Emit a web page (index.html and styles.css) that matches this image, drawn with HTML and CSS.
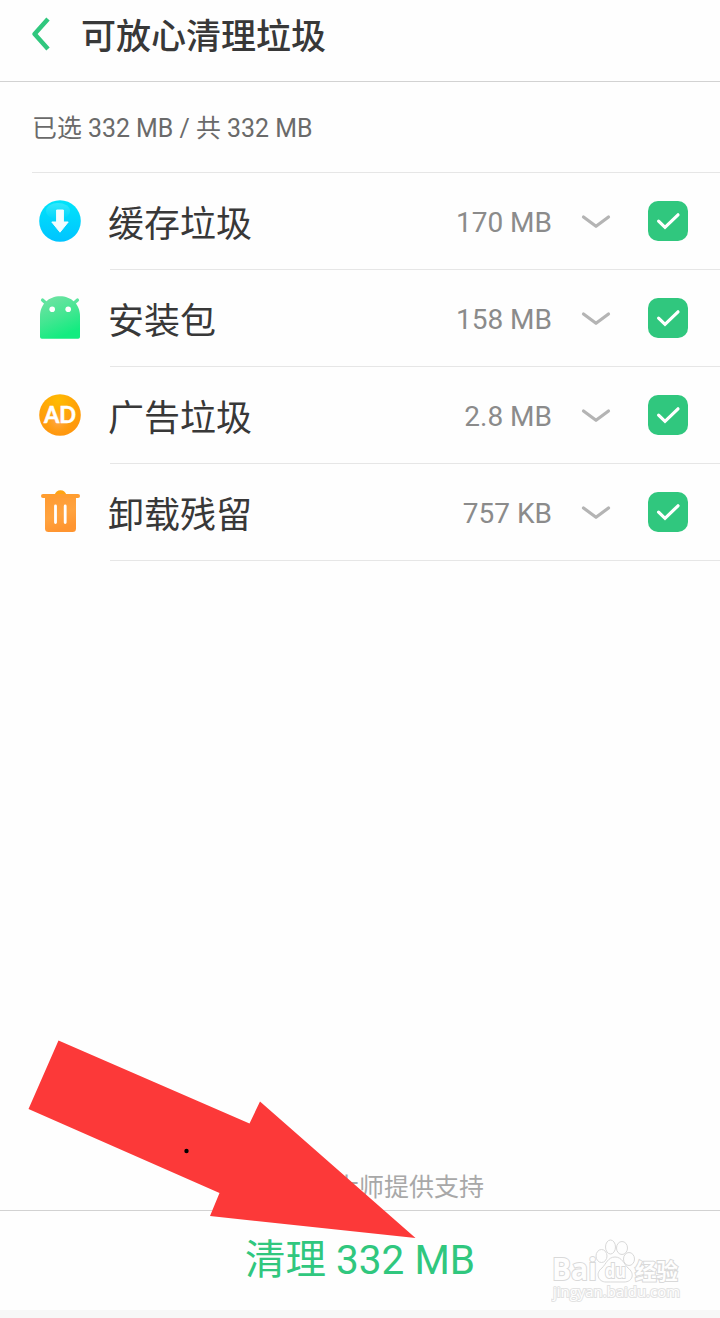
FILE: index.html
```html
<!DOCTYPE html>
<html lang="zh-CN">
<head>
    <meta charset="UTF-8">
    <meta name="viewport" content="width=device-width, initial-scale=1.0">
    <title>可放心清理垃圾</title>
    <link rel="stylesheet" href="styles.css">
</head>

<body>
    <!-- shared icons -->
    <svg class="defs" width="0" height="0">
        <symbol id="down" viewBox="0 0 30 16">
            <path d="M2.5 3 L15 12.300 L27.500 3" fill="none" stroke="#b4b4b4" stroke-width="3.2" stroke-linecap="round" stroke-linejoin="round"/>
        </symbol>
        <symbol id="check" viewBox="0 0 40 40">
            <path d="M10.6 20.2 L17 26.300 L30 13.800" fill="none" stroke="#fff" stroke-width="3.2" stroke-linecap="round" stroke-linejoin="miter"/>
        </symbol>
    </svg>

    <header class="header">
        <svg class="back" width="18" height="34" viewBox="0 0 18 34">
            <path d="M16 2 L2.600 17 L16 32" fill="none" stroke="#30c77e" stroke-width="4.500" stroke-linejoin="round"/>
        </svg>
        <h1>可放心清理垃圾</h1>
    </header>

    <p class="summary">已选 332 MB / 共 332 MB</p>

    <ul class="list">
        <li>
            <svg class="icon" width="44" height="44" viewBox="0 0 44 44">
                <defs>
                    <linearGradient id="blue" x1="0" y1="0" x2="0" y2="1">
                        <stop offset="0" stop-color="#00e4fa"/>
                        <stop offset="1" stop-color="#00c4ff"/>
                    </linearGradient>
                    <linearGradient id="shine" x1="0" y1="0" x2="0" y2="1">
                        <stop offset="0" stop-color="#fff" stop-opacity=".2"/>
                        <stop offset="1" stop-color="#fff" stop-opacity="0"/>
                    </linearGradient>
                </defs>
                <circle cx="22" cy="22" r="20.8" fill="url(#blue)"/>
                <ellipse cx="20" cy="12" rx="12" ry="8" fill="url(#shine)"/>
                <path d="M18.6 11 h6.8 v12 h4.8 L22 33.2 L13.8 23 h4.8 z" fill="#f2fdff" stroke="#f2fdff" stroke-linejoin="round"/>
            </svg>
            <div class="info">
                <span class="name">缓存垃圾</span>
                <span class="size">170 MB</span>
                <svg class="down" width="30" height="16"><use href="#down"/></svg>
                <svg class="check" width="40" height="40"><use href="#check"/></svg>
            </div>
        </li>
        <li>
            <svg class="icon" width="44" height="44" viewBox="0 0 44 44">
                <defs>
                    <linearGradient id="green" x1="0" y1="0" x2=".4" y2="1">
                        <stop offset="0" stop-color="#76e2a6"/>
                        <stop offset=".55" stop-color="#45e692"/>
                        <stop offset="1" stop-color="#13ec80"/>
                    </linearGradient>
                </defs>
                <path d="M4.5 4 L10 9 M39.5 4 L34 9" stroke="#5ce59e" stroke-width="3.2" stroke-linecap="round"/>
                <path d="M2 41 V20 C2 8 11 .2 22 .2 C33 .2 42 8 42 20 V41 Q42 42.8 40.2 42.8 H3.8 Q2 42.8 2 41 z" fill="url(#green)"/>
                <circle cx="14.2" cy="13.2" r="2.8" fill="#fff"/>
                <circle cx="30.2" cy="13.2" r="2.8" fill="#fff"/>
            </svg>
            <div class="info">
                <span class="name">安装包</span>
                <span class="size">158 MB</span>
                <svg class="down" width="30" height="16"><use href="#down"/></svg>
                <svg class="check" width="40" height="40"><use href="#check"/></svg>
            </div>
        </li>
        <li>
            <svg class="icon" width="44" height="44" viewBox="0 0 44 44">
                <defs>
                    <radialGradient id="orange" cx=".45" cy=".15" r=".9">
                        <stop offset="0" stop-color="#ffbc00"/>
                        <stop offset=".55" stop-color="#ff9f0a"/>
                        <stop offset="1" stop-color="#ff960f"/>
                    </radialGradient>
                    <radialGradient id="glow">
                        <stop offset="0" stop-color="#ffab55"/>
                        <stop offset="1" stop-color="#ff9d1c" stop-opacity="0"/>
                    </radialGradient>
                </defs>
                <circle cx="22" cy="22" r="20.8" fill="url(#orange)"/>
                <circle cx="20" cy="28" r="14" fill="url(#glow)"/>
                <text class="ad" x="22" y="30.2" text-anchor="middle">AD</text>
            </svg>
            <div class="info">
                <span class="name">广告垃圾</span>
                <span class="size">2.8 MB</span>
                <svg class="down" width="30" height="16"><use href="#down"/></svg>
                <svg class="check" width="40" height="40"><use href="#check"/></svg>
            </div>
        </li>
        <li>
            <svg class="icon" width="44" height="44" viewBox="0 0 44 44">
                <defs>
                    <linearGradient id="bin" x1="0" y1="0" x2=".3" y2="1">
                        <stop offset="0" stop-color="#ff9a30"/>
                        <stop offset=".6" stop-color="#ffa33f"/>
                        <stop offset="1" stop-color="#ff9530"/>
                    </linearGradient>
                </defs>
                <path d="M16.5 5 Q18 .2 22.5 .2 Q27 .2 28.5 5 z" fill="#ffa412"/>
                <path d="M7 6 H38 V38.5 Q38 42 34.5 42 H10.5 Q7 42 7 38.5 z" fill="url(#bin)"/>
                <rect x="3" y="4" width="39" height="4" rx="2" fill="#ff9d30"/>
                <path d="M17.5 16 V32.5 M27.2 16 V32.5" stroke="#fff" stroke-width="2.8" stroke-linecap="round"/>
            </svg>
            <div class="info">
                <span class="name">卸载残留</span>
                <span class="size">757 KB</span>
                <svg class="down" width="30" height="16"><use href="#down"/></svg>
                <svg class="check" width="40" height="40"><use href="#check"/></svg>
            </div>
        </li>
    </ul>

    <p class="support">大师提供支持</p>

    <footer class="footer">
        <button type="button">清理 332 MB</button>
    </footer>

    <!-- red pointer -->
    <svg class="arrow" width="390" height="200" viewBox="0 0 390 200">
        <polygon points="30.500,0.500 221.500,83.500 232,61.500 387.500,198 182,176 191.500,153 0.500,69" fill="#fc3939"/>
        <circle cx="158.500" cy="111" r="2.200" fill="#000"/>
    </svg>

    <!-- watermark -->
    <svg class="mark" width="140" height="66" viewBox="0 0 140 66">
        <g class="paw">
            <path d="M64 21 C57 21 55 28 51 32 C44 37 47 46 55 46 C60 46 68 46 73 46 C82 46 84 37 77 32 C73 28 71 21 64 21 z"/>
            <ellipse cx="50.500" cy="20" rx="5.500" ry="6.500"/>
            <ellipse cx="59.500" cy="11" rx="5" ry="7"/>
            <ellipse cx="71" cy="12" rx="5.500" ry="6.500"/>
            <ellipse cx="78" cy="23" rx="5.500" ry="6.500"/>
        </g>
        <text class="logo" x="1" y="44" textLength="45" lengthAdjust="spacingAndGlyphs">Bai</text>
        <text class="du" x="54" y="42" textLength="21" lengthAdjust="spacingAndGlyphs">du</text>
        <text class="cn" x="84" y="43" textLength="43" lengthAdjust="spacingAndGlyphs">经验</text>
        <text class="url" x="2" y="61" textLength="127" lengthAdjust="spacingAndGlyphs">jingyan.baidu.com</text>
    </svg>
</body>
</html>
```

FILE: styles.css
```css
* {
    box-sizing: border-box;
}
body {
    margin: 0;
    height: 1318px;
    display: flex;
    flex-direction: column;
    position: relative;
    overflow: hidden;
    background: #fefefe;
    color: #383838;
    font-family: Roboto, "Noto Sans CJK SC", sans-serif;
}
.defs {
    position: absolute;
}
.header {
    height: 82px;
    padding: 0 0 10px 32px;
    display: flex;
    align-items: center;
    border-bottom: 1px solid #d2d2d2;
}
.header h1 {
    margin: 4px 0 0 31px;
    font-size: 35px;
    line-height: 50px;
    font-weight: 500;
}
.back {
    margin-top: -3px;
}
.summary {
    margin: 0 0 0 32px;
    height: 91px;
    line-height: 94px;
    font-size: 24.9px;
    color: #6a6a6a;
    border-bottom: 1px solid #e6e6e6;
}
.list {
    list-style: none;
    margin: 0;
    padding: 0;
}
.list li {
    height: 97px;
    padding-left: 38px;
    display: flex;
    align-items: center;
}
.icon {
    margin-bottom: 2px;
}
.info {
    flex: 1;
    height: 97px;
    margin-left: 28px;
    padding-right: 32px;
    display: flex;
    align-items: center;
    border-bottom: 1px solid #e6e6e6;
}
.name {
    flex: 1;
    margin-left: -2px;
    font-size: 36px;
}
.size {
    padding-top: 2px;
    font-size: 28px;
    color: #8b8b8b;
}
.down {
    margin: 1px 37px 0 29px;
}
.check {
    background: #30c77e;
    border-radius: 10px;
}
.ad {
    font: 700 22px Lato, sans-serif;
    fill: #fff;
    stroke: #fff;
    stroke-width: 0.5px;
}
.support {
    margin: auto 0 0;
    padding: 2px 0 0 334px;
    font-size: 25px;
    line-height: 48px;
    height: 48px;
    color: #a8a8a8;
}
.footer {
    height: 108px;
    padding-bottom: 8px;
    border-top: 1px solid #d2d2d2;
    border-bottom: 8px solid #f7f7f7;
    display: flex;
    justify-content: center;
    align-items: center;
}
.footer button {
    border: none;
    padding: 0;
    background: none;
    font-family: inherit;
    font-size: 40.5px;
    color: #30c77e;
}
.arrow {
    position: absolute;
    left: 28px;
    top: 1040px;
}
.mark {
    position: absolute;
    left: 551px;
    top: 1236px;
    fill: #fefefe;
    stroke: #d9d9d9;
    stroke-width: 1px;
}
.mark text {
    paint-order: stroke;
    stroke-width: 2px;
}
.logo {
    font: 700 30px "Open Sans", sans-serif;
}
.du {
    font: 700 19px "Open Sans", sans-serif;
}
.cn {
    font: 700 22px "Noto Sans CJK SC", sans-serif;
}
.mark .url {
    font: 400 15px "Open Sans", sans-serif;
    stroke: #e2e2e2;
}
```
